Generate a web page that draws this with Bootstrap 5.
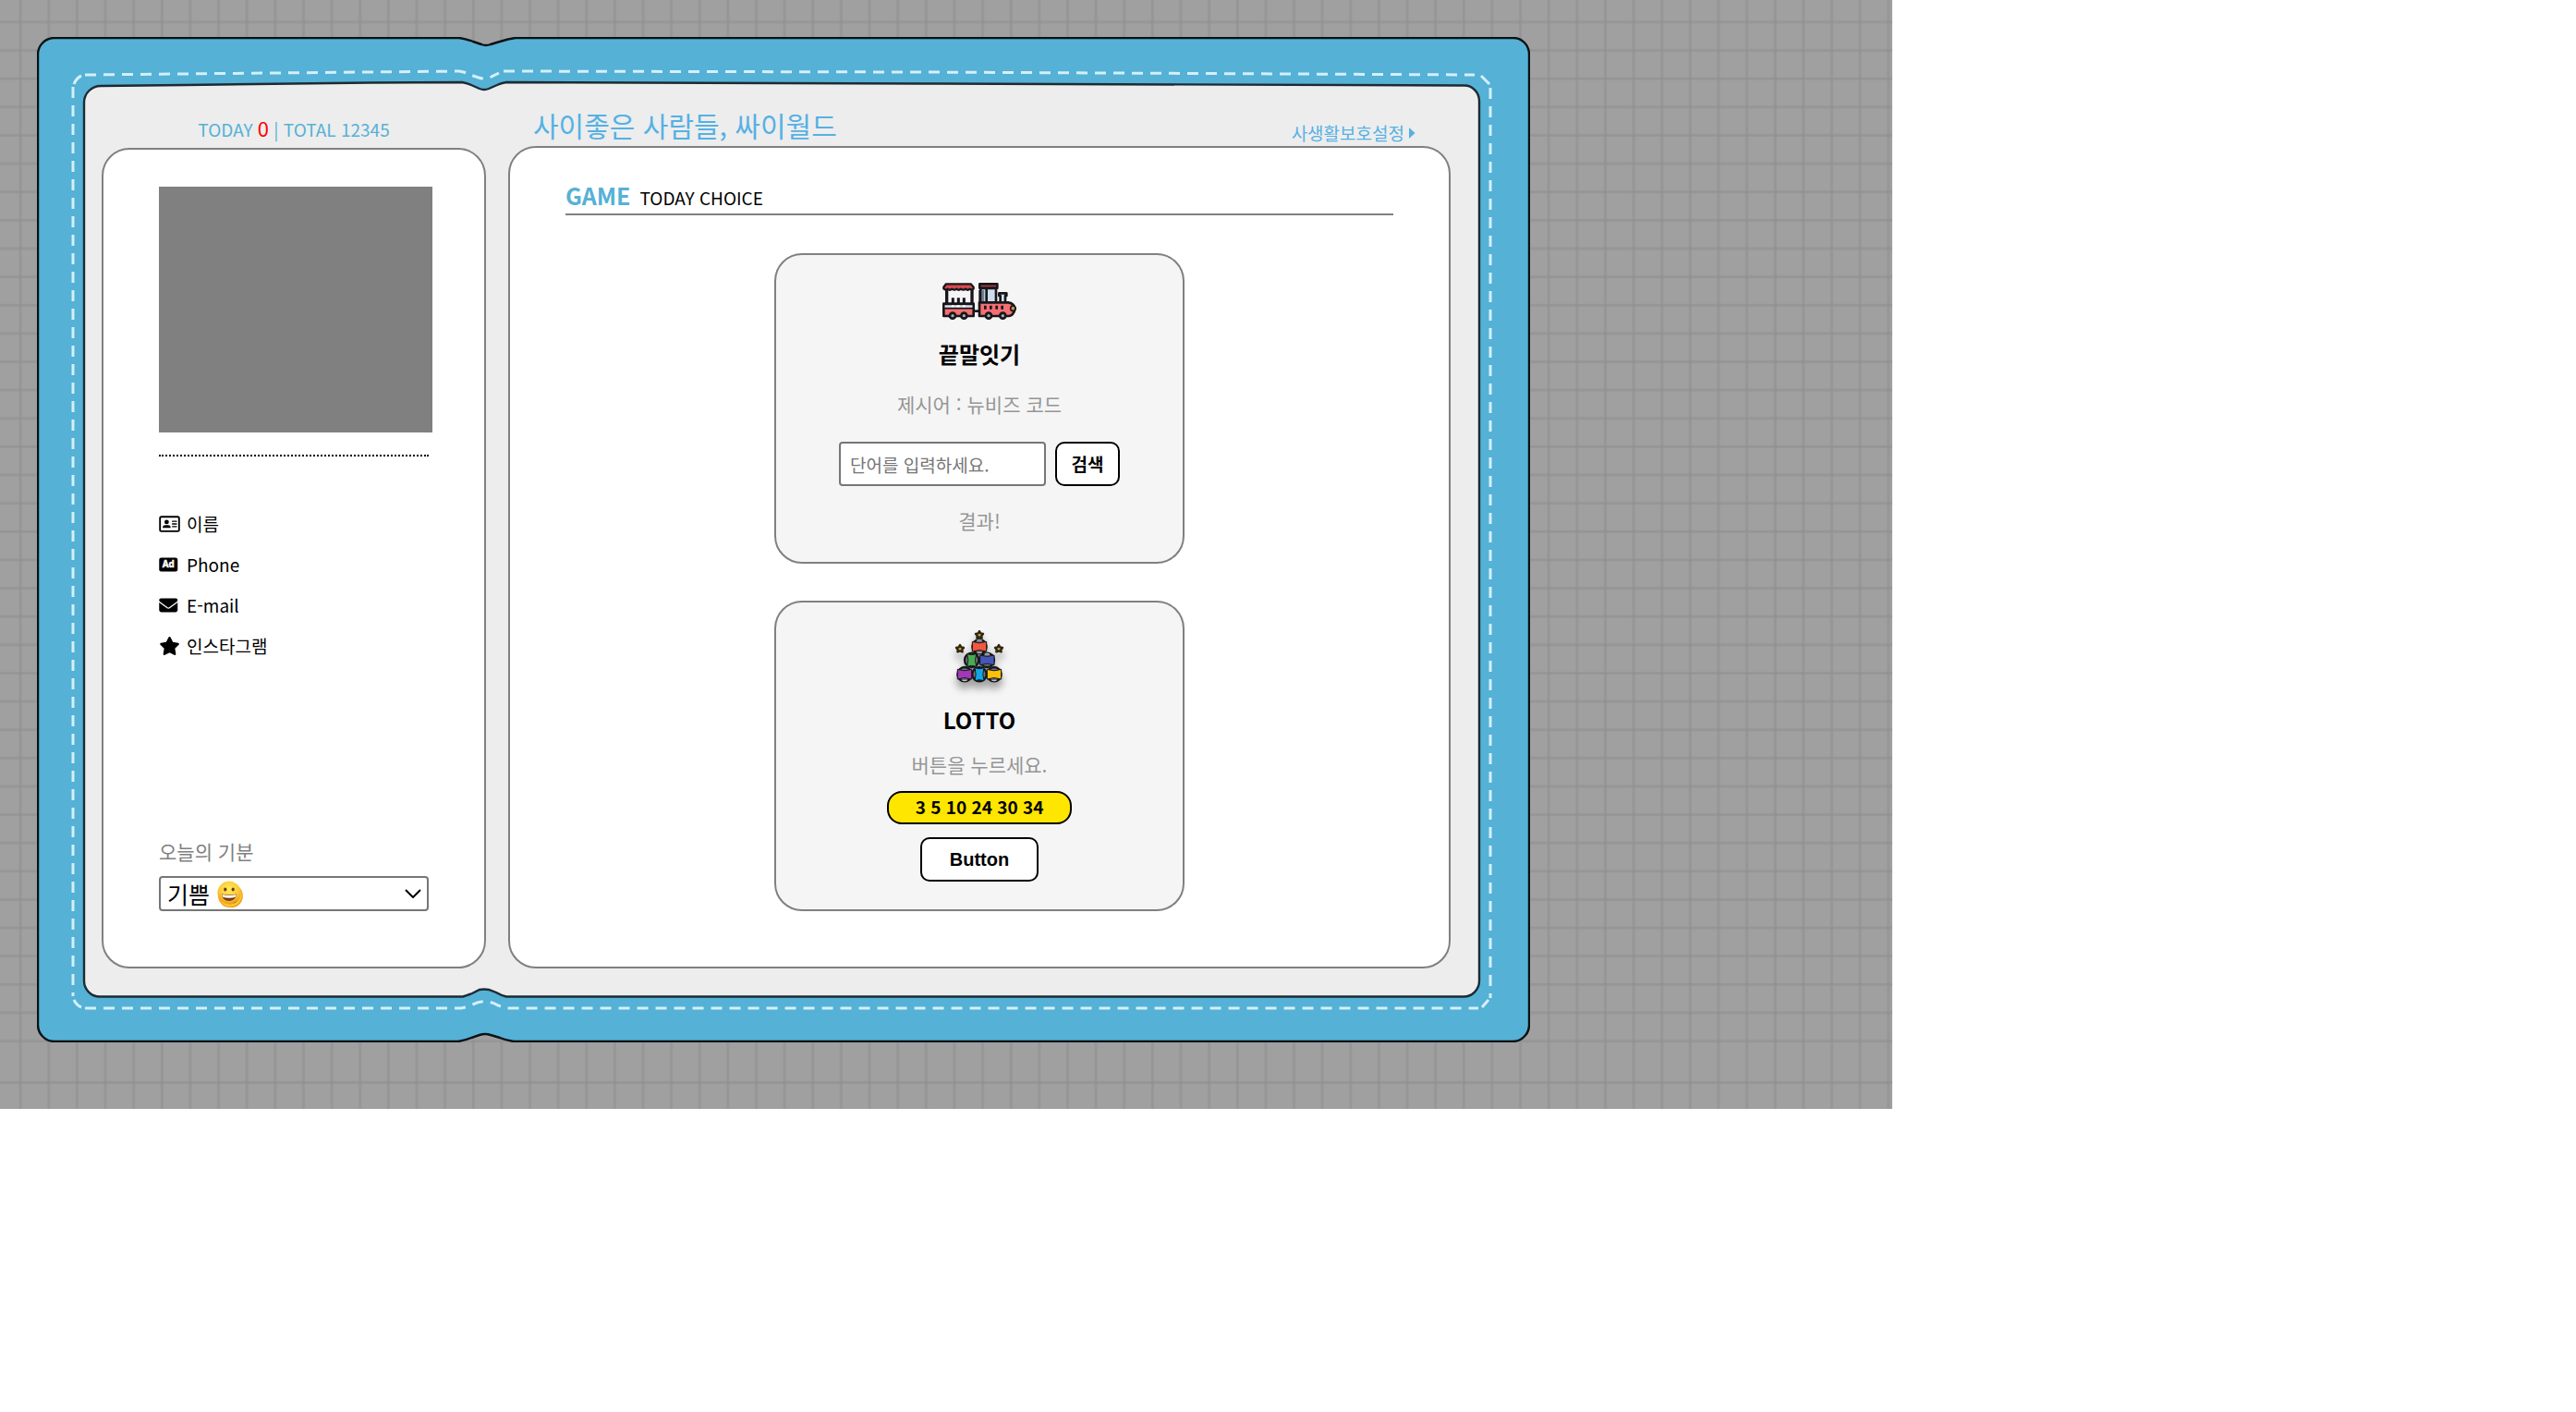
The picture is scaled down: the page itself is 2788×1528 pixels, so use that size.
<!DOCTYPE html>
<html lang="ko">
<head>
<meta charset="utf-8">
<meta name="viewport" content="width=device-width, initial-scale=1">
<title>사이좋은 사람들, 싸이월드</title>
<link href="https://cdn.jsdelivr.net/npm/bootstrap@5.3.0/dist/css/bootstrap.min.css" rel="stylesheet">
<style>
  :root { --sky: #55b1d6; --rule: #808080; --hint: #959595; }
  body { font-family: "Noto Sans CJK KR", "Noto Sans", sans-serif; font-size: 19px; line-height: 28px; color: #000; background: #fff; }
  .desk { max-width: 2048px; padding: 40px 40px 72px; background: #a0a0a0; }
  .desk-grid, .cover { position: absolute; inset: 0; width: 100%; height: 100%; }
  .diary { max-width: 1616px; padding: 0 86px 80px 70px; gap: 24px; }
  .side { width: 416px; }
  .side-top { height: 120px; padding-bottom: 6px; color: var(--sky); }
  .side-top strong { font-size: 22px; font-weight: 400; color: red; }
  .main-top { height: 118px; padding: 0 38px 0 27px; color: #55b1e4; }
  .main-top h1 { font-size: 30px; line-height: 46px; font-weight: 400; }
  .privacy { color: inherit; line-height: 28px; }
  .sheet { border: 2px solid var(--rule); border-radius: 30px; background: #fff; padding: 40px 60px 60px; }
  .sheet-main { padding-top: 30px; }
  .photo { width: 296px; height: 266px; background: #808080; }
  .dots { margin: 24px 0 51px; border-top: 2px dotted #000; }
  .info li { height: 44px; gap: 7px; }
  .info svg { width: 23px; height: 20px; }
  .mood-label { color: var(--rule); font-size: 21px; line-height: 30px; margin-bottom: 12px; }
  .mood { height: 38px; border: 2px solid #767676; border-radius: 4px; padding: 0 36px 0 7px; font-size: 25px; line-height: 32px; color: #000;
    background: #fff url("data:image/svg+xml,%3Csvg xmlns='http://www.w3.org/2000/svg' viewBox='0 0 18 10'%3E%3Cpath d='M1 1l8 8 8-8' fill='none' stroke='%23000' stroke-width='2'/%3E%3C/svg%3E") no-repeat right 6px center / 18px 10px; }
  .mood-face { position: absolute; left: 63px; top: 5px; width: 26px; height: 26px; pointer-events: none; }
  .section-head { height: 43px; padding-top: 3px; border-bottom: 2px solid var(--rule); margin-bottom: 41px; gap: 10px; }
  .section-head h2 { font-size: 25px; line-height: 36px; font-weight: 700; color: var(--sky); }
  .games { gap: 40px; }
  .game { width: 444px; height: 336px; border: 2px solid var(--rule); border-radius: 30px; background: #f5f5f5; padding-top: 30px; }
  .game h3 { font-size: 24px; line-height: 38px; font-weight: 700; margin: 18px 0 0; }
  .game p { font-size: 21px; line-height: 30px; color: var(--hint); margin: 0; }
  .game .given { margin-top: 20px; }
  .game .guide { margin-top: 14px; }
  .word-form { gap: 10px; margin: 26px 0 22px; }
  .word-box { width: 224px; height: 48px; border: 2px solid #767676; border-radius: 4px; font-size: 19px; padding: 0 10px; }
  .word-box::placeholder { color: #757575; }
  .plain-btn { height: 48px; border: 2px solid #000; border-radius: 10px; background: #fff; color: #000; font-weight: 700; font-size: 19px; padding: 0; }
  .search-btn { width: 70px; }
  .draw-btn { width: 128px; font-family: "Liberation Sans", sans-serif; font-size: 20px; margin-top: 14px; }
  .balls { width: 200px; height: 36px; border: 2px solid #000; border-radius: 16px; background: #ffe600; font-weight: 700; line-height: 30px; margin-top: 14px; }
  .lotto-art { filter: drop-shadow(0 7px 4px rgba(0,0,0,.35)); }
</style>
</head>
<body>
<main class="desk position-relative">
  <svg class="desk-grid" aria-hidden="true">
    <defs>
      <pattern id="cols" x="7" y="0" width="30.63" height="1148" patternUnits="userSpaceOnUse"><rect x="13.6" width="3" height="1148" fill="#8e8e8e" opacity=".55"/></pattern>
      <pattern id="rows" x="0" y="8.7" width="60" height="30.63" patternUnits="userSpaceOnUse"><rect y="13.7" width="60" height="3" fill="#8e8e8e" opacity=".55"/></pattern>
    </defs>
    <rect width="100%" height="100%" fill="url(#cols)"/>
    <rect width="100%" height="1140" fill="url(#rows)"/>
    <rect y="1170" width="100%" height="3" fill="#8e8e8e" opacity=".55"/>
  </svg>
  <div class="diary position-relative d-flex">
    <svg class="cover" viewBox="40 40 1616 1088" preserveAspectRatio="none" aria-hidden="true">
      <path d="M59 41H497Q504 42 512 45L521 48Q526 50 531 48L541 45Q550 42 558 41H1638A17 18 0 0 1 1655 59V1109A18 18 0 0 1 1637 1127H556Q548 1126 541 1123L531 1120Q525 1118 519 1120L510 1123Q503 1126 496 1127H59A18 18 0 0 1 41 1109V59A18 18 0 0 1 59 41Z" fill="#55b1d6" stroke="#0b1114" stroke-width="2.4"/>
      <path d="M109 93L200 92 400 89.500 500 89Q506 90 510 92L519 96Q524 98 529 96L538 92Q542 90 548 89L1000 90.500 1585 92.500A16 17 0 0 1 1601 109V1061A17 17 0 0 1 1584 1078.500H548Q542 1077 537 1074L529 1071Q524 1070 519 1071L511 1075Q506 1077 501 1078.500H108A17 17 0 0 1 91 1061V111A18 18 0 0 1 109 93Z" fill="#ededed" stroke="#1c2b32" stroke-width="2.400"/>
      <g fill="none" stroke="#d3f0fa" stroke-width="3" stroke-dasharray="12 8">
        <path d="M92 81L497 77Q504 78 509 81L518 84Q524 86 530 84L540 79"/>
        <path d="M545 77L1000 78 1596 81"/>
        <path d="M1603 82L1612 91" stroke-dasharray="none"/>
        <path d="M1613 95V1080"/>
        <path d="M1611 1082L1604 1090" stroke-dasharray="none"/>
        <path d="M92 1091H499L508 1089Q524 1079 539 1088L548 1091H1600"/>
        <path d="M79 94V1078"/>
        <path d="M80 91Q83 84 88 82M80 1082Q83 1088 88 1090" stroke-dasharray="none"/>
      </g>
    </svg>

    <aside class="side position-relative d-flex flex-column flex-shrink-0">
      <div class="side-top d-flex align-items-end justify-content-center">
        <div>TODAY <strong>0</strong> | TOTAL 12345</div>
      </div>
      <div class="sheet flex-grow-1 d-flex flex-column">
        <div class="photo flex-shrink-0"></div>
        <div class="dots"></div>
        <ul class="info list-unstyled m-0">
          <li class="d-flex align-items-center">
            <svg viewBox="0 0 576 512" aria-hidden="true"><rect x="24" y="56" width="528" height="400" rx="40" fill="none" stroke="#000" stroke-width="48"/><circle cx="208" cy="202" r="62"/><path d="M96 364q0-76 76-76h72q76 0 76 76z"/><path d="M368 184h112M368 256h112M368 328h112" stroke="#000" stroke-width="34" stroke-linecap="round"/></svg>
            <span>이름</span>
          </li>
          <li class="d-flex align-items-center">
            <svg viewBox="0 0 576 512" aria-hidden="true"><rect y="64" width="512" height="384" rx="60"/><text x="256" y="340" text-anchor="middle" font-family="Noto Sans, sans-serif" font-weight="700" font-size="250" fill="#fff" stroke="#fff" stroke-width="12">Ad</text></svg>
            <span>Phone</span>
          </li>
          <li class="d-flex align-items-center">
            <svg viewBox="0 0 576 512" aria-hidden="true"><path d="M48 64C21.500 64 0 85.500 0 112c0 15.100 7.100 29.300 19.200 38.400L236.800 313.600c11.400 8.500 27 8.500 38.400 0L492.800 150.400c12.100-9.100 19.200-23.300 19.200-38.400c0-26.500-21.500-48-48-48H48zM0 176V384c0 35.300 28.700 64 64 64H448c35.300 0 64-28.700 64-64V176L294.400 339.200c-22.800 17.100-54 17.100-76.800 0L0 176z"/></svg>
            <span>E-mail</span>
          </li>
          <li class="d-flex align-items-center">
            <svg viewBox="0 0 576 512" aria-hidden="true"><path d="M316.900 18C311.600 7 300.400 0 288.100 0s-23.400 7-28.800 18L195 150.300 51.400 171.500c-12 1.800-22 10.200-25.700 21.700s-.7 24.200 7.900 32.700L137.800 329 113.200 474.700c-2 12 3 24.200 12.900 31.300s23 8 33.800 2.300l128.300-68.500 128.300 68.500c10.800 5.700 23.900 4.900 33.800-2.300s14.900-19.300 12.900-31.300L438.500 329 542.700 225.900c8.600-8.500 11.700-21.200 7.900-32.700s-13.700-19.900-25.700-21.700L381.200 150.300 316.900 18z"/></svg>
            <span>인스타그램</span>
          </li>
        </ul>
        <div class="mt-auto">
          <label class="mood-label d-block" for="mood">오늘의 기분</label>
          <div class="position-relative">
            <select class="mood form-select" id="mood"><option>기쁨 😀</option></select>
            <svg class="mood-face" viewBox="0 0 26 26" aria-hidden="true">
              <defs><radialGradient id="face" cx=".5" cy=".35" r=".65"><stop offset="0" stop-color="#ffec5c"/><stop offset=".65" stop-color="#fdc938"/><stop offset="1" stop-color="#f0951c"/></radialGradient></defs>
              <circle cx="13" cy="13" r="12.500" fill="url(#face)"/>
              <ellipse cx="8.800" cy="9.500" rx="1.600" ry="2.100" fill="#6b3d10"/><ellipse cx="17.200" cy="9.500" rx="1.600" ry="2.100" fill="#6b3d10"/>
              <path d="M4.800 14.500Q13 16.500 21.200 14.500Q20 22 13 22T4.800 14.500Z" fill="#7a3b12"/><path d="M5.400 15Q13 17 20.600 15Q20.300 17.600 19.300 18Q13 19.500 6.700 18Q5.700 17.600 5.400 15Z" fill="#fff"/>
            </svg>
          </div>
        </div>
      </div>
    </aside>

    <section class="position-relative d-flex flex-column flex-grow-1">
      <header class="main-top d-flex align-items-end justify-content-between">
        <h1 class="m-0">사이좋은 사람들, 싸이월드</h1>
        <a class="privacy text-decoration-none d-flex align-items-center gap-1" href="#">사생활보호설정
          <svg width="8" height="12" viewBox="0 0 8 12" fill="currentColor" aria-hidden="true"><path d="M1 0L7.500 6 1 12z"/></svg></a>
      </header>
      <div class="sheet sheet-main flex-grow-1">
        <div class="section-head d-flex align-items-baseline"><h2 class="m-0">GAME</h2><span>TODAY CHOICE</span></div>
        <div class="games d-flex flex-column align-items-center">
          <article class="game d-flex flex-column align-items-center">
            <svg width="80" height="40" viewBox="0 0 240 120" aria-hidden="true">
              <g stroke="#17171b" stroke-width="8" stroke-linejoin="round">
                <path d="M14 20V70M96 20V70" stroke-width="10"/>
                <rect x="4" y="68" width="97" height="40" fill="#f46f72"/>
                <path d="M5 70H100V83H5Z" fill="#dce5ee" stroke-width="5"/>
                <path d="M12 4H92L101 14V19Q96 25 89 20Q82 26 75 20Q68 26 60 20Q53 26 46 20Q39 26 31 20Q24 26 17 20Q9 25 4 19V14Z" fill="#d9494e" stroke-width="7"/>
                <path d="M34 49V68M52 49V68M70 49V68" stroke-width="9"/>
                <path d="M101 92H120"/>
                <rect x="124" y="18" width="50" height="48" fill="#cfdcec"/>
                <path d="M143 18V62M122 24V62"/>
                <rect x="121" y="4" width="57" height="13" fill="#b63b41"/>
                <path d="M188 64V42H184V34H208V42H204V64Z" fill="#d8e2ec"/>
                <path d="M120 64H214Q231 66 236 83Q231 106 216 108H120Z" fill="#f46f72"/>
                <path d="M139 74V86M157 74V86M176 74V86M194 74V86" stroke-width="8"/>
                <circle cx="229" cy="83" r="8" fill="#c9983a" stroke-width="5"/>
                <g fill="#a9aeb5"><circle cx="33" cy="107" r="9"/><circle cx="70" cy="107" r="9"/><circle cx="150" cy="107" r="9"/><circle cx="196" cy="107" r="9"/></g>
              </g>
              <path d="M30 76H38M46 76H56M66 76H74" stroke="#fff" stroke-width="6"/>
              <path d="M132 24V60" stroke="#6d8199" stroke-width="7"/>
            </svg>
            <h3>끝말잇기</h3>
            <p class="given">제시어 : 뉴비즈 코드</p>
            <form class="word-form d-flex" onsubmit="return false">
              <input class="word-box" type="text" aria-label="단어" placeholder="단어를 입력하세요.">
              <button class="plain-btn search-btn" type="submit">검색</button>
            </form>
            <p>결과!</p>
          </article>
          <article class="game d-flex flex-column align-items-center">
            <svg class="lotto-art" width="60" height="60" viewBox="0 0 180 180" aria-hidden="true">
              <g stroke="#16181c" stroke-width="7" fill="#6d737a">
                <circle cx="90" cy="53" r="23"/><circle cx="65" cy="97" r="23"/><circle cx="115" cy="97" r="23"/>
                <circle cx="42" cy="143" r="23"/><circle cx="90" cy="143" r="23"/><circle cx="138" cy="143" r="23"/>
              </g>
              <g stroke="#16181c" stroke-width="3" stroke-linejoin="round">
                <path d="M67 37Q90 46 113 37V69Q90 60 67 69Z" fill="#f4573c"/>
                <path d="M50 77Q65 83 80 77Q73 97 80 118Q65 112 50 118Q57 97 50 77Z" fill="#48ad50"/>
                <path d="M92 81Q115 90 138 81V113Q115 104 92 113Z" fill="#4657b8"/>
                <path d="M19 127Q42 136 65 127V159Q42 150 19 159Z" fill="#a436b8"/>
                <path d="M75 122Q90 128 105 122Q98 143 105 164Q90 158 75 164Q82 143 75 122Z" fill="#12a6e6"/>
                <path d="M115 127Q138 136 161 127V159Q138 150 115 159Z" fill="#ffc107"/>
              </g>
              <g fill="none" stroke="#e8eaec" stroke-width="4" opacity=".8"><path d="M82 34Q90 30 98 34M107 78Q115 74 123 78M34 162Q42 166 50 162M130 162Q138 166 146 162M82 72Q90 76 98 72"/></g>
              <g fill="#dfac18" stroke="#2c2817" stroke-width="7" stroke-linejoin="round">
                <path id="st" d="M90 3L94 10 102 12 97 18 98 25 90 22 82 25 83 18 78 12 86 10Z"/>
                <use href="#st" x="-63" y="45"/><use href="#st" x="63" y="45"/>
              </g>
            </svg>
            <h3>LOTTO</h3>
            <p class="guide">버튼을 누르세요.</p>
            <div class="balls text-center">3 5 10 24 30 34</div>
            <button class="plain-btn draw-btn" type="button">Button</button>
          </article>
        </div>
      </div>
    </section>
  </div>
</main>
<script src="https://cdn.jsdelivr.net/npm/bootstrap@5.3.0/dist/js/bootstrap.bundle.min.js"></script>
</body>
</html>
